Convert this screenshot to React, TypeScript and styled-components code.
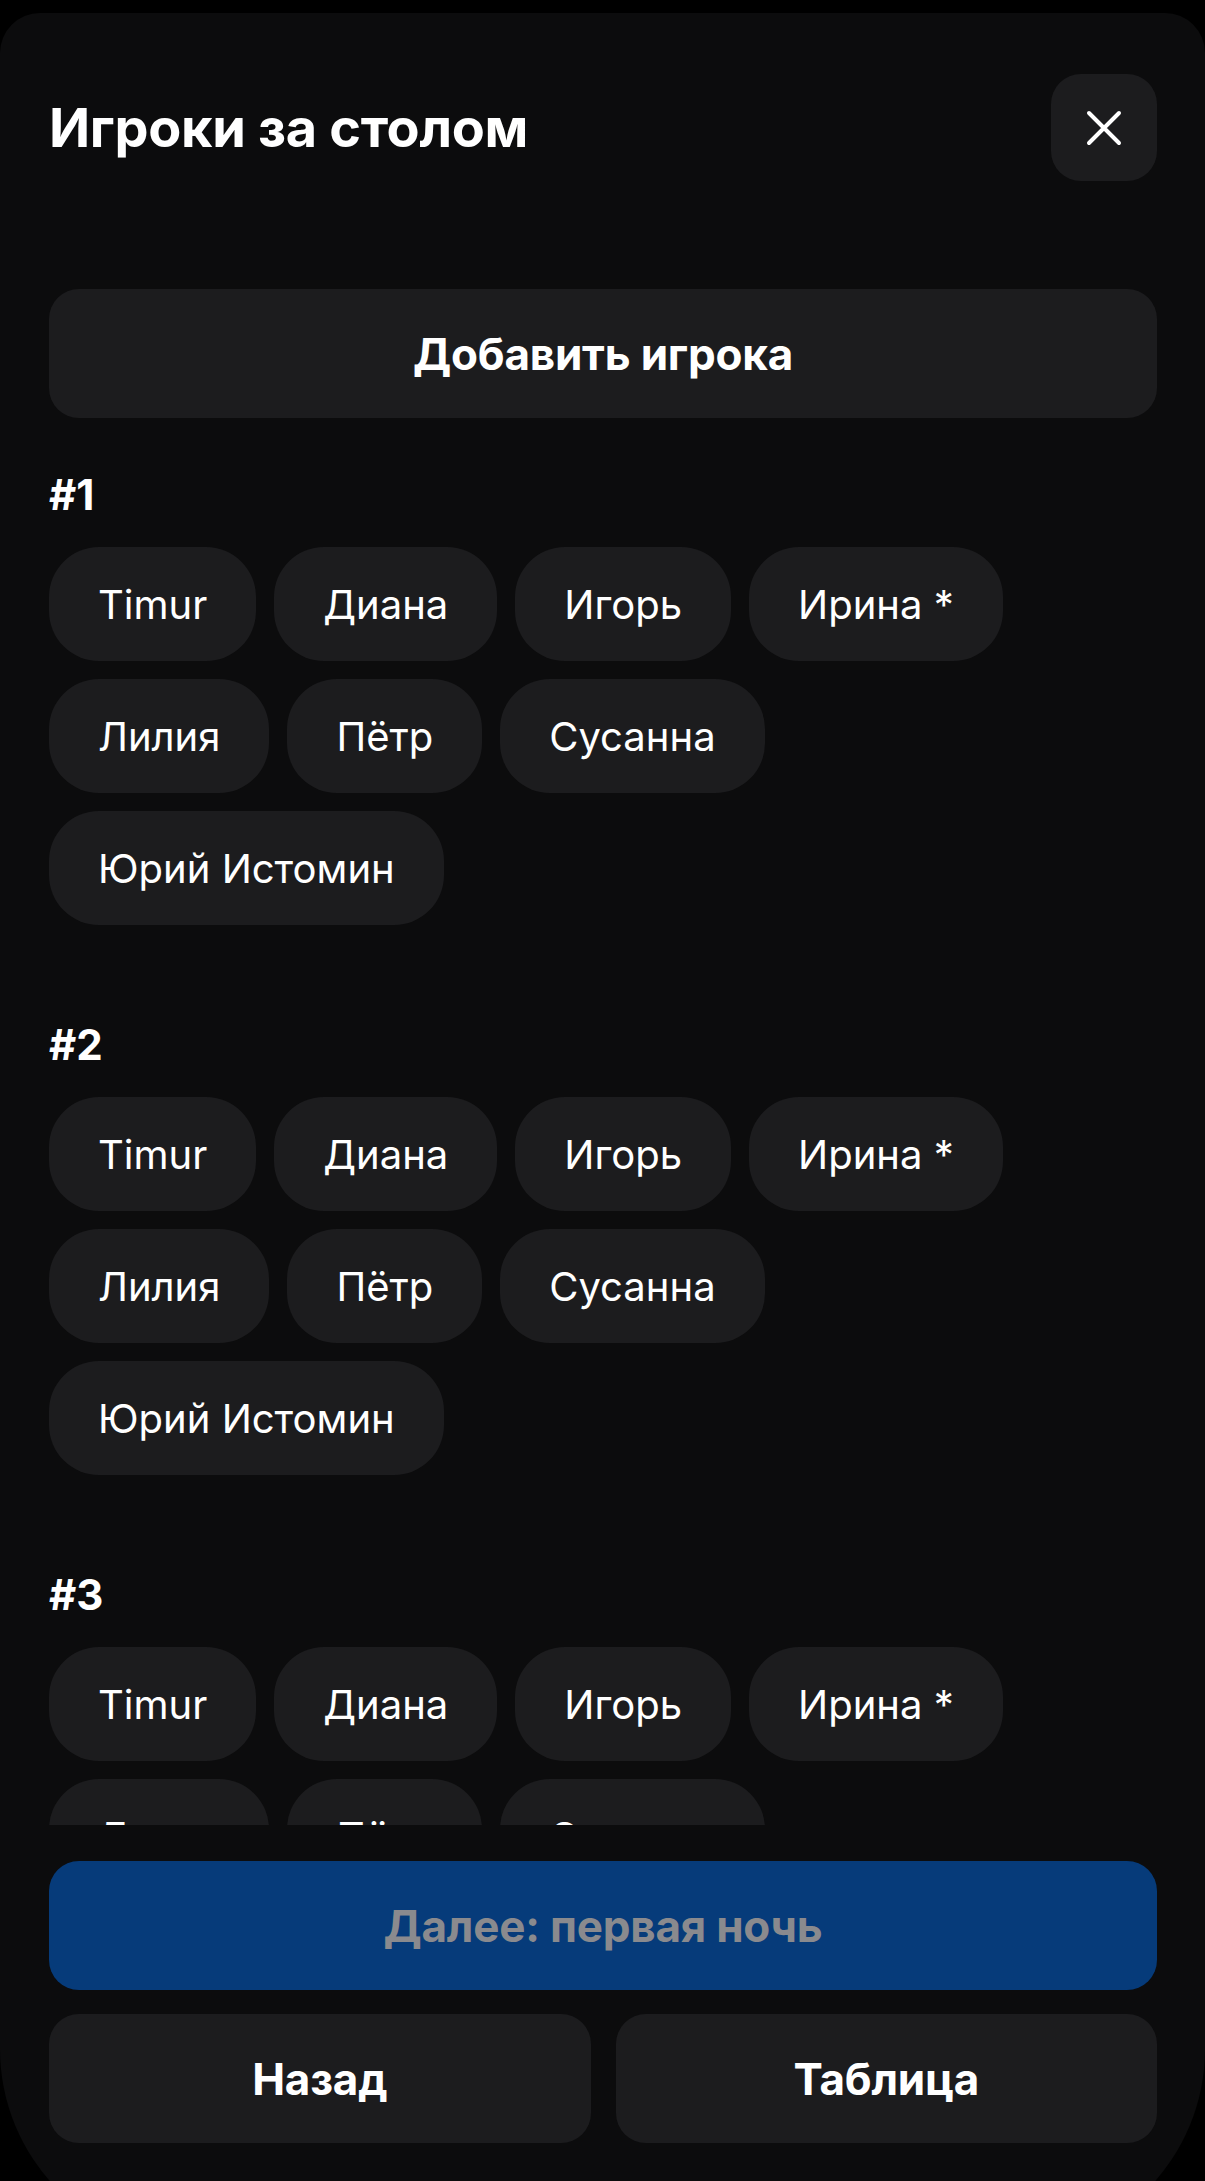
import styled, { createGlobalStyle } from "styled-components"

const GlobalStyle = createGlobalStyle`
	html, body {
		margin: 0;
		padding: 0;
		background: #000;
		height: 2181px;
		overflow: hidden;
	}
	body {
		font-family: Inter, "Noto Sans", "Liberation Sans", sans-serif;
		color: #fff;
		-webkit-font-smoothing: antialiased;
	}
	* {
		box-sizing: border-box;
	}
`

const Sheet = styled.div`
	margin-top: 13px;
	height: 2236px;
	background: #0c0c0d;
	border-radius: 40px 40px 200px 200px;
	padding: 61px 48px 0 49px;
	display: flex;
	flex-direction: column;
	overflow: hidden;
`

const Header = styled.div`
	display: flex;
	align-items: center;
	justify-content: space-between;
	height: 107px;
	flex-shrink: 0;
`

const Title = styled.h1`
	margin: 0;
	font-size: 54px;
	font-weight: 700;
	letter-spacing: -0.3px;
`

const CloseButton = styled.button`
	width: 106px;
	height: 107px;
	border: none;
	border-radius: 30px;
	background: #1c1c1e;
	display: flex;
	align-items: center;
	justify-content: center;
	padding: 0;
	cursor: pointer;
`

const Scroll = styled.div`
	margin-top: 108px;
	height: 1536px;
	flex-shrink: 0;
	overflow: hidden;
`

const Button = styled.button<{ $tone?: "primary" | "plain" }>`
	display: block;
	height: 129px;
	width: 100%;
	flex-shrink: 0;
	border: none;
	border-radius: 30px;
	background: ${(p) => (p.$tone === "primary" ? "#063b7a" : "#1c1c1e")};
	color: ${(p) => (p.$tone === "primary" ? "#8a8a8e" : "#fff")};
	font-family: inherit;
	font-size: 44px;
	font-weight: 700;
	letter-spacing: -0.2px;
	cursor: pointer;
`

const Section = styled.section`
	margin-top: 53px;
	& + & {
		margin-top: 96px;
	}
`

const SeatLabel = styled.div`
	font-size: 42px;
	line-height: 48px;
	font-weight: 700;
`

const Chips = styled.div`
	margin-top: 28px;
	display: flex;
	flex-wrap: wrap;
	gap: 18px 18px;
`

const Chip = styled.button`
	height: 114px;
	padding: 0 49px;
	border: none;
	border-radius: 50px;
	background: #1c1c1e;
	color: #fff;
	font-family: inherit;
	font-size: 40px;
	font-weight: 400;
	cursor: pointer;
`

const Footer = styled.div`
	margin-top: 36px;
	display: flex;
	flex-direction: column;
	gap: 24px;
`

const Row = styled.div`
	display: grid;
	grid-template-columns: 1fr 1fr;
	gap: 25px;
`

const players = ["Timur", "Диана", "Игорь", "Ирина *", "Лилия", "Пётр", "Сусанна", "Юрий Истомин"]

const CloseIcon = () => (
	<svg width="36" height="36" viewBox="0 0 36 36" fill="none">
		<path d="M3 3L33 33M33 3L3 33" stroke="#fff" strokeWidth="4" strokeLinecap="round" />
	</svg>
)

export default function App() {
	return (
		<>
			<GlobalStyle />
			<Sheet>
				<Header>
					<Title>Игроки за столом</Title>
					<CloseButton aria-label="Закрыть">
						<CloseIcon />
					</CloseButton>
				</Header>

				<Scroll>
					<Button>Добавить игрока</Button>
					{[1, 2, 3].map((seat) => (
						<Section key={seat}>
							<SeatLabel>#{seat}</SeatLabel>
							<Chips>
								{players.map((name) => (
									<Chip key={name}>{name}</Chip>
								))}
							</Chips>
						</Section>
					))}
				</Scroll>

				<Footer>
					<Button $tone="primary">Далее: первая ночь</Button>
					<Row>
						<Button>Назад</Button>
						<Button>Таблица</Button>
					</Row>
				</Footer>
			</Sheet>
		</>
	)
}
